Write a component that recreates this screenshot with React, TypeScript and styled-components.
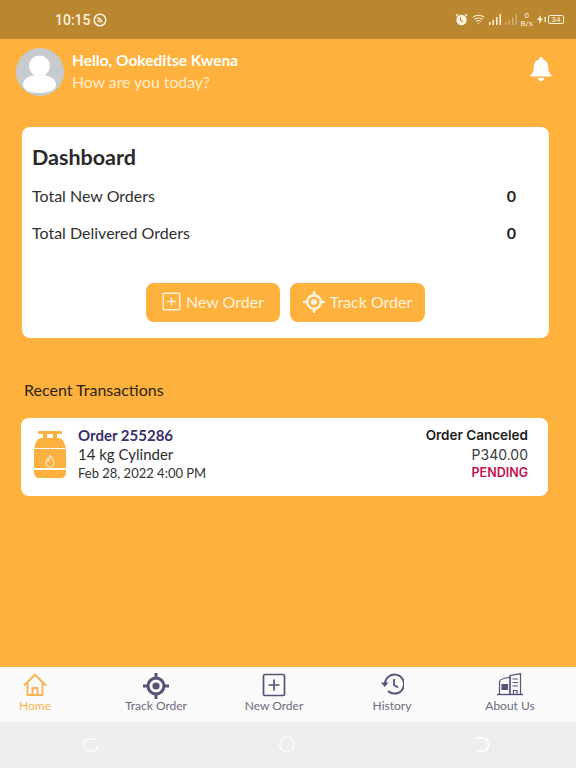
import React from 'react';
import styled, { createGlobalStyle } from 'styled-components';

const GlobalStyle = createGlobalStyle`
    html, body {
        margin: 0;
        padding: 0;
        background: #ffb13d;
    }
    * {
        box-sizing: border-box;
    }
`;

const Screen = styled.div`
    width: 576px;
    height: 768px;
    display: flex;
    flex-direction: column;
    background: #ffb13d;
    font-family: Lato, 'Open Sans', sans-serif;
    overflow: hidden;
`;

const StatusBar = styled.div`
    height: 39px;
    flex: none;
    background: #ba8630;
    display: flex;
    align-items: center;
    justify-content: space-between;
    padding: 0 12px 0 55px;
    color: #fff3df;
`;

const StatusLeft = styled.div`
    display: flex;
    align-items: center;
    gap: 2px;
    font-family: Roboto, sans-serif;
    font-size: 14px;
    font-weight: 500;
`;

const StatusRight = styled.div`
    display: flex;
    align-items: center;
    gap: 4px;
`;

const Speed = styled.div`
    font-family: Roboto, sans-serif;
    font-size: 8px;
    line-height: 8px;
    text-align: center;
    margin-left: -2px;
`;

const ChargeGroup = styled.div`
    display: flex;
    align-items: center;
    gap: 1px;
`;

const BatteryBox = styled.div`
    width: 16px;
    height: 9px;
    border: 1px solid #fff3df;
    border-radius: 2px;
    font-family: Roboto, sans-serif;
    font-size: 8px;
    line-height: 7px;
    text-align: center;
`;

const Main = styled.div`
    flex: 1;
    display: flex;
    flex-direction: column;
    padding: 9px 27px 0 21px;
`;

const Greeting = styled.div`
    display: flex;
    align-items: center;
    margin: 0 -4px 0 -5px;
`;

const Avatar = styled.div`
    width: 48px;
    height: 48px;
    flex: none;
    border-radius: 50%;
    background: #c7cbce;
    overflow: hidden;
`;

const GreetingText = styled.div`
    margin: 0 0 2px 8px;
    flex: 1;
    color: #fff;
`;

const Hello = styled.div`
    font-size: 15.5px;
    font-weight: 700;
    line-height: 20px;
    margin-bottom: 1px;
`;

const HowAreYou = styled.div`
    font-size: 15.8px;
    line-height: 21px;
    color: #ffeccb;
`;

const BellSlot = styled.div`
    margin-top: -7px;
    display: flex;
`;

const Card = styled.div`
    background: #fff;
    border-radius: 8px;
    width: 527px;
`;

const DashboardCard = styled(Card)`
    margin-top: 31px;
    height: 211px;
    padding: 17px 33px 0 10px;
    margin-left: 1px;
`;

const DashboardTitle = styled.div`
    font-size: 21.5px;
    font-weight: 700;
    color: #2a2a2a;
    line-height: 26px;
    margin-bottom: 7px;
`;

const StatRow = styled.div`
    display: flex;
    justify-content: space-between;
    align-items: center;
    height: 37px;
    font-size: 16px;
    color: #303030;
`;

const StatValue = styled.span`
    font-size: 16px;
    font-weight: 700;
    color: #222;
`;

const Actions = styled.div`
    display: flex;
    justify-content: center;
    gap: 10px;
    margin: 32px -23px 0 0;
`;

const ActionButton = styled.div<{ $width: number }>`
    width: ${(props) => props.$width}px;
    height: 39px;
    background: #ffb13d;
    border-radius: 8px;
    display: flex;
    align-items: center;
    justify-content: center;
    gap: 5px;
    padding-bottom: 2px;
    color: #fff3df;
    font-size: 16px;
`;

const SectionTitle = styled.div`
    margin-top: 42px;
    margin-left: 3px;
    font-size: 16px;
    line-height: 20px;
    color: #2b2412;
`;

const TransactionCard = styled(Card)`
    margin-top: 18px;
    height: 78px;
    display: flex;
    align-items: center;
    padding: 0 20px 6px 13px;
`;

const TransactionInfo = styled.div`
    flex: 1;
    margin: 0 0 2px 12px;
`;

const OrderId = styled.div`
    font-size: 15px;
    font-weight: 700;
    line-height: 20px;
    color: #3a2f6b;
`;

const Cylinder = styled.div`
    font-size: 15px;
    line-height: 19px;
    color: #2d2d2d;
`;

const DateText = styled.div`
    font-size: 13px;
    line-height: 18px;
    color: #333;
`;

const TransactionStatus = styled.div`
    text-align: right;
    margin-bottom: 2px;
    font-family: Inter, sans-serif;
`;

const StatusTitle = styled.div`
    font-size: 13.5px;
    font-weight: 600;
    line-height: 20px;
    color: #1c1c1c;
`;

const Price = styled.div`
    font-size: 14px;
    line-height: 19px;
    color: #3a3a3a;
`;

const Pending = styled.div`
    font-size: 12.5px;
    font-weight: 600;
    line-height: 18px;
    color: #c2134a;
`;

const TabBar = styled.div`
    height: 55px;
    flex: none;
    background: #fbfafb;
    display: grid;
    grid-template-columns: 97px repeat(4, 118px);
`;

const TabItem = styled.div<{ $active?: boolean }>`
    display: flex;
    flex-direction: column;
    align-items: center;
    padding-right: ${(props) => (props.$active ? '27px' : '0')};
    color: ${(props) => (props.$active ? '#f8b451' : '#6f6a80')};
    font-size: 12px;
    line-height: 14px;
`;

const TabIcon = styled.div`
    height: 32px;
    padding-top: 6px;
    display: flex;
    align-items: flex-start;
    justify-content: center;
`;

const NavBar = styled.div`
    height: 46px;
    flex: none;
    background: #eeeeee;
    display: flex;
    justify-content: space-between;
    align-items: flex-start;
    padding: 14px 86px 0 82px;
`;

const NavRing = styled.svg`
    display: block;
`;

const CylinderWrap = styled.div`
    position: relative;
    flex: none;
    display: flex;
`;

const FlameMark = styled.svg`
    position: absolute;
    left: 11px;
    top: 23px;
`;

const AlarmIcon = () => (
    <svg width="13" height="13" viewBox="0 0 13 13">
        <circle cx="6.5" cy="7" r="5.2" fill="#fff3df" />
        <path d="M1 3l2-2M12 3l-2-2" stroke="#fff3df" strokeWidth="1.4" />
        <path d="M5.5 4v3.2l2.2 1.6" stroke="#ba8630" strokeWidth="1.1" fill="none" />
    </svg>
);

const WifiIcon = () => (
    <svg width="13" height="11" viewBox="0 0 13 11" fill="none" stroke="#fff3df" strokeWidth="1.1">
        <path d="M.8 3.4a8.5 8.5 0 0 1 11.4 0M2.6 5.5a5.8 5.8 0 0 1 7.8 0M4.4 7.5a3 3 0 0 1 4.2 0" />
        <circle cx="6.5" cy="9.5" r=".7" fill="#fff3df" stroke="none" />
    </svg>
);

const SignalIcon = () => (
    <svg width="30" height="13" viewBox="0 0 30 13" fill="#fff3df">
        <rect x="0" y="9" width="1.5" height="3" />
        <rect x="3.5" y="7" width="1.5" height="5" />
        <rect x="7" y="4" width="1.5" height="8" />
        <rect x="10.5" y="1" width="1.5" height="11" />
        <g opacity="0.35">
            <rect x="16" y="9" width="1.5" height="3" />
            <rect x="19.5" y="7" width="1.5" height="5" />
            <rect x="23" y="4" width="1.5" height="8" />
            <rect x="26.5" y="1" width="1.5" height="11" />
        </g>
    </svg>
);

const DndIcon = () => (
    <svg width="14" height="14" viewBox="0 0 14 14" fill="none" stroke="#fff3df" strokeWidth="1.5">
        <circle cx="7" cy="7" r="5.8" />
        <path d="M4 5.5c2.5-1 4.5 1 5 4M4.5 8c1-.6 2 0 2.5 1.5" />
    </svg>
);

const ChargeIcon = () => (
    <svg width="10" height="9" viewBox="0 0 10 9" fill="#fff3df">
        <path d="M4 0L0 5h2.5L2 9l4-5.5H3.5z" />
        <rect x="7.5" y="2" width="1.4" height="5" />
    </svg>
);

const AvatarFigure = () => (
    <svg width="48" height="48" viewBox="0 0 48 48" fill="#fff">
        <circle cx="23.5" cy="18" r="10.5" />
        <path d="M7 37c0-7 7-10 16.5-10S40 30 40 37c0 5-7 8-16.5 8S7 42 7 37z" />
    </svg>
);

const BellIcon = () => (
    <svg width="24" height="26" viewBox="0 0 24 26" fill="#fff">
        <path d="M12 1c1.2 0 2 .8 2 2v.6c3.4.9 5.2 3.6 5.2 7.2 0 4.4 1 6.4 3.3 8.4v1.3h-21v-1.3c2.3-2 3.3-4 3.3-8.4 0-3.6 1.8-6.3 5.2-7.2V3c0-1.2.8-2 2-2z" />
        <path d="M9 22h6c0 1.8-1.300 3-3 3s-3-1.200-3-3z" />
    </svg>
);

const PlusBoxIcon = ({ color, size, stroke }: { color: string; size: number; stroke: number }) => (
    <svg width={size} height={size} viewBox="0 0 24 24" fill="none" stroke={color} strokeWidth={stroke}>
        <rect x="1.5" y="1.5" width="21" height="21" rx="1.5" />
        <path d="M12 6.5v11M6.5 12h11" />
    </svg>
);

const TargetIcon = ({ color, size }: { color: string; size: number }) => (
    <svg width={size} height={size} viewBox="0 0 26 26" fill="none" stroke={color}>
        <circle cx="13" cy="13" r="8" strokeWidth="3" />
        <circle cx="13" cy="13" r="3.6" fill={color} stroke="none" />
        <path d="M13 .5v4.5M13 21v4.5M.5 13h4.5M21 13h4.5" strokeWidth="3" strokeLinecap="round" />
    </svg>
);

const CylinderIcon = () => (
    <svg width="32" height="47" viewBox="0 0 32 47" fill="#fbb040">
        <rect x="4" y="0" width="24" height="3" rx="1" />
        <rect x="9" y="3" width="4" height="5" />
        <rect x="19" y="3" width="4" height="5" />
        <path d="M8 7h16c4 0 7 4 7.5 10H.5C1 11 4 7 8 7z" />
        <rect x="0" y="18" width="32" height="19" />
        <path d="M0 39h32v3c0 3-2.5 5-5 5H5c-2.5 0-5-2-5-5z" />
    </svg>
);

const HomeIcon = () => (
    <svg width="24" height="24" viewBox="0 0 24 24" fill="none" stroke="#f8b451" strokeWidth="1.9" strokeLinejoin="round">
        <path d="M1.5 12L12 1.8 22.5 12" strokeLinecap="round" />
        <path d="M4.5 9.5V22h15V9.5" />
        <path d="M9.5 22v-7h5v7" />
    </svg>
);

const HistoryIcon = () => (
    <svg width="24" height="22" viewBox="0 0 24 22" fill="none" stroke="#5a5078" strokeWidth="2">
        <path d="M5 11a9.5 9.5 0 1 1 3 7" />
        <path d="M1 9.5h7.5L4.8 14z" fill="#5a5078" stroke="none" />
        <path d="M14 6v6l4 2.5" strokeWidth="1.8" />
    </svg>
);

const BuildingIcon = () => (
    <svg width="26" height="23" viewBox="0 0 26 23" fill="none" stroke="#5a5078" strokeWidth="1.2">
        <path d="M0 21.5h26" strokeWidth="1.4" />
        <path d="M2.5 21.5V9.5c0-2 2-3.5 4.500-4l6-1.500v17.500" />
        <path d="M13 21.5V2.500L23.500 .8v20.700" />
        <path d="M15.500 6h5.500M15.500 9.500h5.500M15.500 13h5.500" />
        <path d="M16.500 21.500v-4h3.500v4" />
        <path d="M5 11.500h5.500v5H5zM5 14h5.500M7.700 11.500v5" fill="#5a5078" />
    </svg>
);

const RING = 'rgba(255,255,255,0.95)';

const NavBack = () => (
    <NavRing width="17" height="17" viewBox="0 0 17 17" fill="none" stroke={RING} strokeWidth="1.3">
        <path d="M13 3H7C3.500 3 1.500 5.500 1.500 9s2.500 6 6 6h3c3 0 4.500-2.500 5-5" />
    </NavRing>
);

const NavHome = () => (
    <NavRing width="16" height="17" viewBox="0 0 16 17" fill="none" stroke={RING} strokeWidth="1.3">
        <circle cx="8" cy="8.5" r="7.3" />
    </NavRing>
);

const NavRecent = () => (
    <NavRing width="15" height="17" viewBox="0 0 15 17" fill="none" stroke={RING} strokeWidth="1.3">
        <path d="M1 2h6c4 0 6.500 2.500 6.500 6.500S11 15 7 15H2" />
    </NavRing>
);

const App = () => {
    return (
        <Screen>
            <GlobalStyle />
            <StatusBar>
                <StatusLeft>
                    10:15 <DndIcon />
                </StatusLeft>
                <StatusRight>
                    <AlarmIcon />
                    <WifiIcon />
                    <SignalIcon />
                    <Speed>
                        <div>0</div>
                        <div>B/s</div>
                    </Speed>
                    <ChargeGroup>
                        <ChargeIcon />
                        <BatteryBox>34</BatteryBox>
                    </ChargeGroup>
                </StatusRight>
            </StatusBar>
            <Main>
                <Greeting>
                    <Avatar>
                        <AvatarFigure />
                    </Avatar>
                    <GreetingText>
                        <Hello>Hello, Ookeditse Kwena</Hello>
                        <HowAreYou>How are you today?</HowAreYou>
                    </GreetingText>
                    <BellSlot>
                        <BellIcon />
                    </BellSlot>
                </Greeting>
                <DashboardCard>
                    <DashboardTitle>Dashboard</DashboardTitle>
                    <StatRow>
                        <span>Total New Orders</span>
                        <StatValue>0</StatValue>
                    </StatRow>
                    <StatRow>
                        <span>Total Delivered Orders</span>
                        <StatValue>0</StatValue>
                    </StatRow>
                    <Actions>
                        <ActionButton $width={134}>
                            <PlusBoxIcon color="#fff3df" size={19} stroke={1.8} />
                            New Order
                        </ActionButton>
                        <ActionButton $width={135}>
                            <TargetIcon color="#fff3df" size={22} />
                            Track Order
                        </ActionButton>
                    </Actions>
                </DashboardCard>
                <SectionTitle>Recent Transactions</SectionTitle>
                <TransactionCard>
                    <CylinderWrap>
                        <CylinderIcon />
                        <FlameMark width="10" height="14" viewBox="0 0 10 14" fill="none" stroke="#ffe9c8" strokeWidth="1.2">
                            <path d="M5 1c.5 2.5 4 4 4 7.5C9 11 7.2 13 5 13S1 11 1 8.500c0-1.500.8-2.700 1.600-3.500.2 1 .6 1.500 1 1.700C4 5 4.400 3 5 1z" />
                        </FlameMark>
                    </CylinderWrap>
                    <TransactionInfo>
                        <OrderId>Order 255286</OrderId>
                        <Cylinder>14 kg Cylinder</Cylinder>
                        <DateText>Feb 28, 2022 4:00 PM</DateText>
                    </TransactionInfo>
                    <TransactionStatus>
                        <StatusTitle>Order Canceled</StatusTitle>
                        <Price>P340.00</Price>
                        <Pending>PENDING</Pending>
                    </TransactionStatus>
                </TransactionCard>
            </Main>
            <TabBar>
                <TabItem $active>
                    <TabIcon>
                        <HomeIcon />
                    </TabIcon>
                    Home
                </TabItem>
                <TabItem>
                    <TabIcon>
                        <TargetIcon color="#5a5078" size={26} />
                    </TabIcon>
                    Track Order
                </TabItem>
                <TabItem>
                    <TabIcon>
                        <PlusBoxIcon color="#5a5078" size={24} stroke={1.7} />
                    </TabIcon>
                    New Order
                </TabItem>
                <TabItem>
                    <TabIcon>
                        <HistoryIcon />
                    </TabIcon>
                    History
                </TabItem>
                <TabItem>
                    <TabIcon>
                        <BuildingIcon />
                    </TabIcon>
                    About Us
                </TabItem>
            </TabBar>
            <NavBar>
                <NavBack />
                <NavHome />
                <NavRecent />
            </NavBar>
        </Screen>
    );
};

export default App;
